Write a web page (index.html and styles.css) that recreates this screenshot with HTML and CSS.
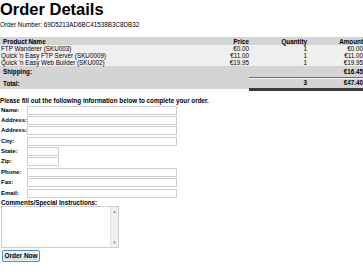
FILE: index.html
```html
<!DOCTYPE html>
<html lang="en">
<head>
    <meta charset="UTF-8">
    <meta name="viewport" content="width=device-width, initial-scale=1.0">
    <title>Order Details</title>
    <link rel="stylesheet" href="styles.css">
</head>
<body>
    <h1 class="order_title">Order Details</h1>
    <p class="order_number">Order Number: 69D5213AD6BC41538B3C8DB32</p>

    <table class="order_table">
        <colgroup>
            <col>
            <col class="col_price">
            <col class="col_qty">
            <col class="col_amount">
        </colgroup>
        <tr class="order_head">
            <th class="cell_name">Product Name</th>
            <th class="cell_num">Price</th>
            <th class="cell_num">Quantity</th>
            <th class="cell_num">Amount</th>
        </tr>
        <tr class="order_item">
            <td class="cell_item">FTP Wanderer (SKU003)</td>
            <td class="cell_num">€0.00</td>
            <td class="cell_num">1</td>
            <td class="cell_num">€0.00</td>
        </tr>
        <tr class="order_item">
            <td class="cell_item">Quick 'n Easy FTP Server (SKU0009)</td>
            <td class="cell_num">€11.00</td>
            <td class="cell_num">1</td>
            <td class="cell_num">€11.00</td>
        </tr>
        <tr class="order_item">
            <td class="cell_item">Quick 'n Easy Web Builder (SKU002)</td>
            <td class="cell_num">€19.95</td>
            <td class="cell_num">1</td>
            <td class="cell_num">€19.95</td>
        </tr>
        <tr class="order_shipping">
            <th class="cell_name">Shipping:</th>
            <td></td>
            <td></td>
            <th class="cell_num">€16.45</th>
        </tr>
        <tr class="order_total">
            <th class="cell_name">Total:</th>
            <td></td>
            <th class="cell_num cell_sum">3</th>
            <th class="cell_num cell_sum">€47.40</th>
        </tr>
    </table>

    <form class="order_form" onsubmit="return false;">
        <p class="form_intro">Please fill out the following information below to complete your order.</p>

        <div class="form_grid">
            <label for="f_name">Name:</label>
            <input type="text" id="f_name" class="form_input">

            <label for="f_addr1">Address:</label>
            <input type="text" id="f_addr1" class="form_input">

            <label for="f_addr2">Address:</label>
            <input type="text" id="f_addr2" class="form_input">

            <label for="f_city">City:</label>
            <input type="text" id="f_city" class="form_input">

            <label for="f_state">State:</label>
            <input type="text" id="f_state" class="form_input form_short">

            <label for="f_zip">Zip:</label>
            <input type="text" id="f_zip" class="form_input form_short">

            <label for="f_phone">Phone:</label>
            <input type="text" id="f_phone" class="form_input">

            <label for="f_fax">Fax:</label>
            <input type="text" id="f_fax" class="form_input">

            <label for="f_email">Email:</label>
            <input type="text" id="f_email" class="form_input">
        </div>

        <label class="form_comments_label" for="f_comments">Comments/Special Instructions:</label>
        <div class="form_comments">
            <textarea id="f_comments" class="form_textarea"></textarea>
            <!-- old style always-on scrollbar -->
            <div class="form_scroll">
                <span>&#9652;</span>
                <span>&#9662;</span>
            </div>
        </div>

        <button type="submit" class="form_button">Order Now</button>
    </form>
</body>
</html>
```

FILE: styles.css
```css
* {
    box-sizing: border-box;
}

body {
    margin: 0;
    font-family: "Liberation Sans", Arial, sans-serif;
    font-size: 6.3px;
    color: #000;
    background: #fff;
}

/* Heading */
.order_title {
    margin: 0;
    font-size: 16.5px;
    line-height: 18px;
}

.order_number {
    margin: 3px 0 8px 0;
    line-height: 8px;
}

/* Order Table */
.order_table {
    width: 100%;
    border-collapse: collapse;
    border-spacing: 0;
    table-layout: fixed;
}

.col_price {
    width: 60px;
}

.col_qty {
    width: 58px;
}

.col_amount {
    width: 56px;
}

.order_table th,
.order_table td {
    padding: 0;
    line-height: 7px;
    white-space: nowrap;
}

.cell_name {
    text-align: left;
    padding-left: 3px !important;
}

.cell_item {
    text-align: left;
    padding-left: 1px !important;
}

.cell_num {
    text-align: right;
}

.order_head {
    height: 8px;
    background: #d4d4d4;
}

.order_item {
    height: 7px;
    background: #efefef;
}

.order_shipping {
    height: 11px;
    background: #d4d4d4;
}

.order_total {
    height: 12px;
    background: #d4d4d4;
}

.cell_sum {
    border-top: 1px solid #6e6e6e;
    border-bottom: 3px solid #3c3c3c;
    box-shadow: inset 0 1px 0 #f4f4f4;
}

/* Form */
.form_intro {
    margin: 6px 0 1px 0;
    font-weight: bold;
    line-height: 8px;
}

.form_grid {
    display: grid;
    grid-template-columns: 27px auto;
    grid-auto-rows: 9px;
    row-gap: 1.375px;
    align-items: center;
    padding-left: 1px;
}

.form_grid label {
    font-size: 6px;
    font-weight: bold;
    line-height: 7px;
    white-space: nowrap;
}

.form_input {
    width: 150px;
    height: 9px;
    margin-left: -1px;
    padding: 0 2px;
    border: 1px solid #cdcdcd;
    font-size: 6px;
    background: #fff;
}

.form_short {
    width: 32px;
}

.form_comments_label {
    display: block;
    margin-top: 1px;
    padding-left: 1px;
    font-weight: bold;
    line-height: 7px;
}

.form_comments {
    display: flex;
    width: 118px;
    height: 42px;
    margin-left: 1px;
    border: 1px solid #cdcdcd;
    background: #fff;
}

.form_textarea {
    flex: 1;
    border: none;
    resize: none;
    padding: 1px;
    font-size: 6px;
    outline: none;
}

.form_scroll {
    width: 8px;
    display: flex;
    flex-direction: column;
    justify-content: space-between;
    align-items: center;
    padding: 2px 0;
    background: #f0f0f0;
    border-left: 1px solid #e4e4e4;
    color: #8a8a8a;
    font-family: "DejaVu Sans", sans-serif;
    font-size: 5px;
    line-height: 5px;
}

.form_button {
    display: block;
    width: 38px;
    height: 12px;
    margin: 2px 0 0 2px;
    padding: 0;
    font-family: "Liberation Sans", Arial, sans-serif;
    font-size: 6.5px;
    font-weight: bold;
    color: #000;
    border: 1px solid #4f8fbf;
    border-radius: 2px;
    background: linear-gradient(#f4f9fc, #e6f1f8 50%, #d3e6f2 50%, #c6dfee);
    box-shadow: inset 0 0 0 1px #eef6fb;
    cursor: pointer;
}
```
